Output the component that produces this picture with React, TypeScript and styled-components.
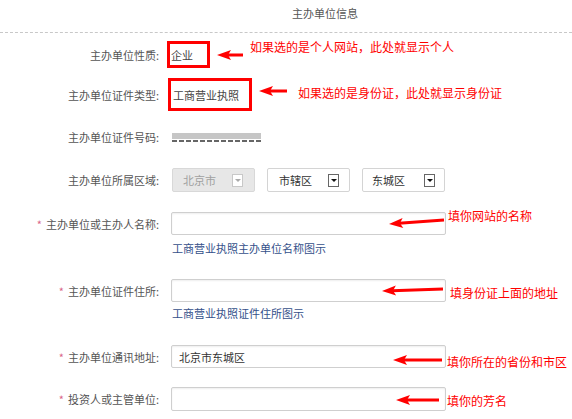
import React from 'react';
import styled, { createGlobalStyle } from 'styled-components';

const Global = createGlobalStyle`
  html, body { margin: 0; padding: 0; background: #fff; }
  body {
    font-family: "Noto Sans CJK SC", "Noto Sans", sans-serif;
    width: 572px; height: 419px; overflow: hidden;
  }
`;

const Page = styled.div`
  width: 572px;
  height: 419px;
  overflow: hidden;
  position: relative;
`;

const Title = styled.div`
  height: 26px;
  line-height: 26px;
  padding: 0 0 6px 78px;
  text-align: center;
  border-bottom: 1px dashed #c8c8c8;
  font-size: 11px;
  color: #555;
`;

const Row = styled.div<{ $mt: number; $h: number }>`
  position: relative;
  display: grid;
  grid-template-columns: 159px 1fr;
  column-gap: 12px;
  align-items: center;
  margin-top: ${p => p.$mt}px;
  height: ${p => p.$h}px;
`;

const Label = styled.label`
  text-align: right;
  font-size: 11px;
  line-height: 14px;
  color: #555;
  white-space: nowrap;
`;

const Star = styled.span`
  color: #d9668a;
  margin-right: 4px;
`;

const Boxed = styled.div<{ $w: number; $h: number; $shift: number }>`
  box-sizing: border-box;
  width: ${p => p.$w}px;
  height: ${p => p.$h}px;
  border: 3px solid #f00;
  margin-left: -${p => p.$shift}px;
  padding-left: ${p => 4 - p.$shift + 1}px;
  display: flex;
  align-items: center;
  font-size: 11px;
  color: #444;
  justify-self: start;
`;

const Redacted = styled.div`
  width: 89px;
  height: 9px;
  margin: 6px 0 0 1px;
  align-self: start;
  background:
    linear-gradient(#c6c6c6, #c6c6c6) top / 100% 6px no-repeat,
    repeating-linear-gradient(90deg, #666 0 5px, transparent 5px 7px) bottom / 100% 2px no-repeat;
`;

const Selects = styled.div`
  display: flex;
  gap: 12px;
  margin-left: 1px;
`;

const Select = styled.div<{ $disabled?: boolean; $pl: number; $pr: number }>`
  box-sizing: border-box;
  width: 83px;
  height: 24px;
  border: 1px solid ${p => (p.$disabled ? '#d8d8d8' : '#d4d4d4')};
  border-radius: 2px;
  background: ${p => (p.$disabled ? '#e7e7e7' : '#fff')};
  display: flex;
  align-items: center;
  justify-content: space-between;
  padding: 0 ${p => p.$pr}px 0 ${p => p.$pl}px;
  font-size: 11px;
  color: ${p => (p.$disabled ? '#a0a0a0' : '#333')};
`;

const DropBtn = styled.span<{ $disabled?: boolean }>`
  box-sizing: border-box;
  width: 11px;
  height: 13px;
  border: 1px solid ${p => (p.$disabled ? '#c8c8c8' : '#666')};
  background: #fff;
  display: flex;
  align-items: center;
  justify-content: center;
  &::before {
    content: '';
    border-left: 3px solid transparent;
    border-right: 3px solid transparent;
    border-top: 3px solid ${p => (p.$disabled ? '#aaa' : '#111')};
  }
`;

const Input = styled.div`
  box-sizing: border-box;
  width: 275px;
  height: 100%;
  border: 1px solid #cfcfcf;
  border-radius: 2px;
  background: #fff;
  box-shadow: inset 0 1px 2px rgba(0, 0, 0, 0.07);
  display: flex;
  align-items: center;
  padding-left: 7px;
  font-size: 11px;
  color: #333;
`;

const Hint = styled.a<{ $mt: number }>`
  display: block;
  margin: ${p => p.$mt}px 0 0 172px;
  font-size: 11px;
  line-height: 14px;
  color: #34508a;
  text-decoration: none;
`;

const Note = styled.span<{ $x: number; $y: number }>`
  position: absolute;
  left: ${p => p.$x}px;
  top: ${p => p.$y}px;
  font-size: 12px;
  line-height: 14px;
  color: #f00;
  white-space: nowrap;
`;

const ArrowSvg = styled.svg`
  position: absolute;
  left: 0;
  top: 0;
  width: 572px;
  height: 40px;
  overflow: visible;
  pointer-events: none;
`;

function RedArrow({ x1, y1, x2, y2 }: { x1: number; y1: number; x2: number; y2: number }) {
  const len = Math.hypot(x2 - x1, y2 - y1);
  const ang = (Math.atan2(y2 - y1, x2 - x1) * 180) / Math.PI;
  return (
    <ArrowSvg>
      <g transform={`translate(${x1} ${y1}) rotate(${ang})`} fill="#f00">
        <polygon points="0,0 14,-5 11,0 14,5" />
        <rect x={10} y={-1.5} width={len - 10} height={3} />
      </g>
    </ArrowSvg>
  );
}

export default function App() {
  return (
    <Page>
      <Global />
      <Title>主办单位信息</Title>

      <Row $mt={8} $h={27}>
        <Label>主办单位性质:</Label>
        <Boxed $w={43} $h={27} $shift={4}>企业</Boxed>
        <RedArrow x1={217} y1={14} x2={243} y2={14} />
        <Note $x={250} $y={-1}>如果选的是个人网站，此处就显示个人</Note>
      </Row>

      <Row $mt={10} $h={33}>
        <Label>主办单位证件类型:</Label>
        <Boxed $w={84} $h={33} $shift={3}>工商营业执照</Boxed>
        <RedArrow x1={259} y1={13} x2={287} y2={13} />
        <Note $x={298} $y={8}>如果选的是身份证，此处就显示身份证</Note>
      </Row>

      <Row $mt={16} $h={20}>
        <Label>主办单位证件号码:</Label>
        <Redacted />
      </Row>

      <Row $mt={21} $h={24}>
        <Label>主办单位所属区域:</Label>
        <Selects>
          <Select $disabled $pl={10} $pr={11}>
            北京市<DropBtn $disabled />
          </Select>
          <Select $pl={11} $pr={10}>
            市辖区<DropBtn />
          </Select>
          <Select $pl={9} $pr={9}>
            东城区<DropBtn />
          </Select>
        </Selects>
      </Row>

      <Row $mt={20} $h={23}>
        <Label><Star>*</Star>主办单位或主办人名称:</Label>
        <Input />
        <RedArrow x1={389} y1={12} x2={444} y2={8} />
        <Note $x={448} $y={-3}>填你网站的名称</Note>
      </Row>
      <Hint $mt={6}>工商营业执照主办单位名称图示</Hint>

      <Row $mt={24} $h={23}>
        <Label><Star>*</Star>主办单位证件住所:</Label>
        <Input />
        <RedArrow x1={382} y1={12} x2={443} y2={10} />
        <Note $x={450} $y={7}>填身份证上面的地址</Note>
      </Row>
      <Hint $mt={4}>工商营业执照证件住所图示</Hint>

      <Row $mt={25} $h={23}>
        <Label><Star>*</Star>主办单位通讯地址:</Label>
        <Input>北京市东城区</Input>
        <RedArrow x1={393} y1={15} x2={442} y2={15} />
        <Note $x={447} $y={10}>填你所在的省份和市区</Note>
      </Row>

      <Row $mt={19} $h={24}>
        <Label><Star>*</Star>投资人或主管单位:</Label>
        <Input />
        <RedArrow x1={396} y1={13} x2={439} y2={13} />
        <Note $x={447} $y={7}>填你的芳名</Note>
      </Row>
    </Page>
  );
}
